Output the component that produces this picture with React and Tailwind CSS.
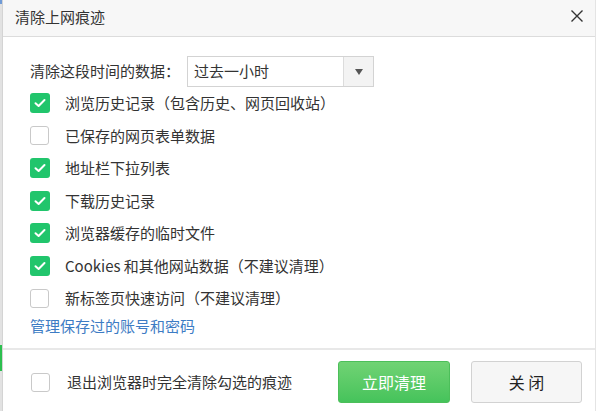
import { useState } from "react";

const font = { fontFamily: '"Noto Sans CJK SC", "Noto Sans", sans-serif' };

const options = [
  { label: "浏览历史记录（包含历史、网页回收站）", checked: true },
  { label: "已保存的网页表单数据", checked: false },
  { label: "地址栏下拉列表", checked: true },
  { label: "下载历史记录", checked: true },
  { label: "浏览器缓存的临时文件", checked: true },
  { label: "Cookies 和其他网站数据（不建议清理）", checked: true },
  { label: "新标签页快速访问（不建议清理）", checked: false },
];

const CheckBox = ({ checked, onClick }) =>
  checked ? (
    <button
      onClick={onClick}
      className="w-[20px] h-[20px] rounded-[3px] bg-[#21c56c] flex items-center justify-center shrink-0"
    >
      <svg width="12" height="10" viewBox="0 0 12 10" fill="none">
        <path d="M1.5 5.2 L4.6 8 L10.5 2" stroke="white" strokeWidth="2" strokeLinecap="round" strokeLinejoin="round" />
      </svg>
    </button>
  ) : (
    <button
      onClick={onClick}
      className="w-[19px] h-[19px] rounded-[3px] border border-[#c9c9c9] bg-white shrink-0"
    />
  );

export default function App() {
  const [items, setItems] = useState(options.map((o) => o.checked));
  const [onExit, setOnExit] = useState(false);

  const toggle = (i) => setItems(items.map((v, j) => (j === i ? !v : v)));

  return (
    <div className="w-[596px] h-[411px] flex bg-white text-[#333]" style={font}>
      {/* strip of the window behind */}
      <div className="w-[2px] flex flex-col bg-[#e2e2e2]">
        <div className="h-[4px] bg-[#6f9ad6]" />
        <div className="h-[341px]" />
        <div className="h-[26px] bg-[#2cbf4f]" />
      </div>

      <div className="flex-1 flex flex-col border-l border-[#d4d4d4] border-r border-r-[#e4e4e4]">
        {/* title bar */}
        <div className="h-[37px] flex items-center justify-between pl-[12px] pr-[12px] bg-[#f7f7f7] border-b border-[#dcdcdc]">
          <span className="text-[15px] text-[#333] leading-none -mt-[4px]">清除上网痕迹</span>
          <svg width="12" height="12" viewBox="0 0 12 12" className="-mt-[4px]">
            <path d="M0.5 0.5 L11.5 11.5 M11.5 0.5 L0.5 11.5" stroke="#333" strokeWidth="1.4" />
          </svg>
        </div>

        {/* body */}
        <div className="flex-1 flex flex-col pl-[27px] pt-[19px]">
          <div className="flex items-center h-[31px]">
            <span className="text-[15px] w-[157px]">清除这段时间的数据：</span>
            <div className="flex h-[31px] w-[187px] border border-[#d3d3d3]">
              <span className="flex-1 flex items-center pl-[6px] text-[15px]">过去一小时</span>
              <div className="w-[30px] flex items-center justify-center bg-[#f3f3f3] border-l border-[#dcdcdc]">
                <svg width="8" height="6" viewBox="0 0 8 6">
                  <path d="M0 0 H8 L4 6 Z" fill="#555" />
                </svg>
              </div>
            </div>
          </div>

          <div className="flex flex-col">
            {options.map((o, i) => (
              <div key={o.label} className="h-[32.5px] flex items-center">
                <div className="w-[35px] flex">
                  <CheckBox checked={items[i]} onClick={() => toggle(i)} />
                </div>
                <span className="text-[15px] whitespace-nowrap">{o.label}</span>
              </div>
            ))}
          </div>

          <a href="#" className="text-[15px] text-[#3d7cc4] leading-[22px]">
            管理保存过的账号和密码
          </a>
        </div>

        {/* footer */}
        <div className="h-[63px] border-t-2 border-[#e8e8e8] flex items-center pl-[28px] pr-[13px] pt-[3px]">
          <div className="w-[36px] flex">
            <CheckBox checked={onExit} onClick={() => setOnExit(!onExit)} />
          </div>
          <span className="text-[15px] flex-1">退出浏览器时完全清除勾选的痕迹</span>
          <button className="w-[112px] h-[42px] rounded-[3px] bg-gradient-to-b from-[#70d374] to-[#45c35b] border border-[#4cbf5a] text-white text-[16px]">
            立即清理
          </button>
          <button className="ml-[21px] w-[111px] h-[42px] rounded-[3px] bg-[#f6f6f6] border border-[#d2d2d2] text-[16px] text-[#222]">
            关&nbsp;闭
          </button>
        </div>
      </div>
    </div>
  );
}
